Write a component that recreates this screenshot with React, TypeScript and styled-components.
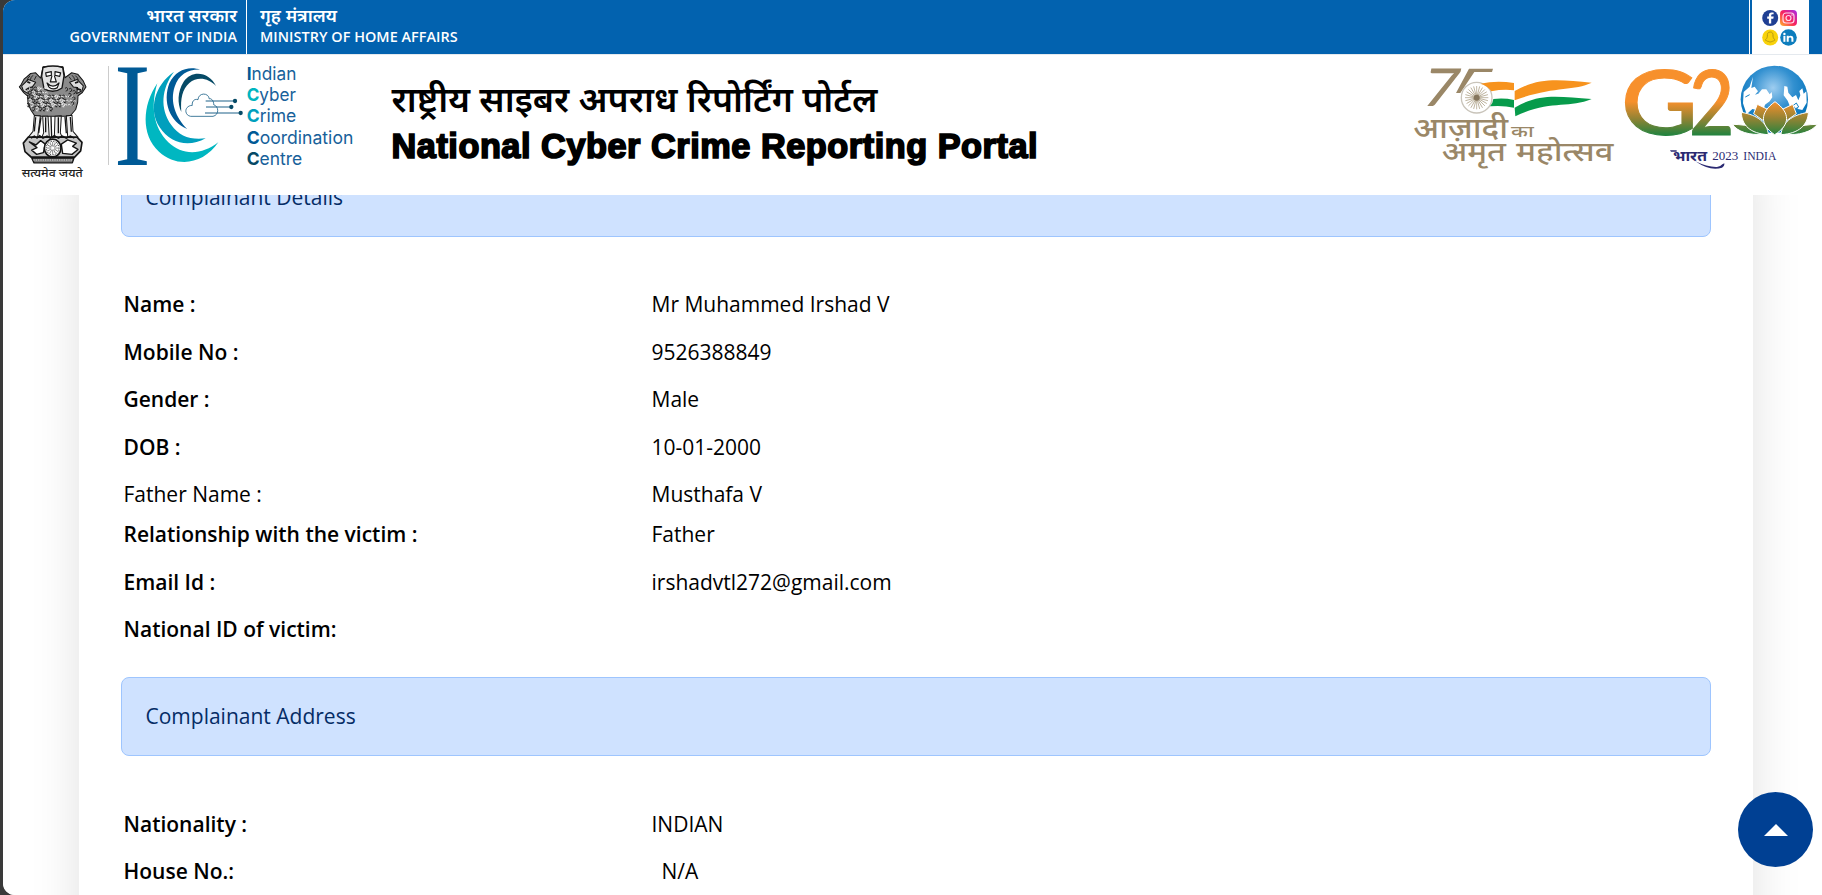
import React from "react";
import styled, { createGlobalStyle } from "styled-components";

const GlobalStyle = createGlobalStyle`
  * { box-sizing: border-box; }
  body {
    margin: 0;
    background: #3a3a3a;
    overflow: hidden;
    color: #000;
    font-family: "Open Sans", "Noto Sans", sans-serif;
  }
  svg { overflow: visible; flex: none; }
`;

const Page = styled.div`
  height: 895px;
  margin-left: 3px;
  background: #fff;
  border-radius: 12px 0 0 12px;
  overflow: hidden;
  display: flex;
  flex-direction: column;
`;

const TopBar = styled.div`
  height: 54px;
  flex: none;
  background: #0262af;
  display: flex;
  color: #fff;
`;

const TopCell = styled.div<{ $align: "left" | "right"; $width: number }>`
  width: ${(p) => p.$width}px;
  padding: 4px ${(p) => (p.$align === "right" ? 9 : 0)}px 0 ${(p) => (p.$align === "left" ? 13 : 0)}px;
  text-align: ${(p) => p.$align};
  border-right: ${(p) => (p.$align === "right" ? "1px solid #fff" : "none")};
  white-space: nowrap;
`;

const HindiSmall = styled.div`
  font-family: "Noto Sans", sans-serif;
  font-size: 18.2px;
  line-height: 22px;
  height: 23px;
  font-weight: 600;
`;

const EnglishSmall = styled.div`
  font-size: 14.4px;
  line-height: 20px;
  font-weight: 600;
  letter-spacing: 0.05px;
`;

const Social = styled.div`
  width: 57px;
  margin: 0 13px 0 auto;
  background: #fff;
  box-shadow: -2px 0 0 #0262af, -3px 0 0 #fff;
  padding: 9px 0 0 10px;
`;

const Header = styled.header`
  height: 141px;
  flex: none;
  border-top: 1px solid #e4e9ee;
  background: #fff;
  display: flex;
  align-items: flex-start;
`;

const EmblemSlot = styled.div`
  width: 106px;
  height: 111px;
  margin-top: 10px;
  padding-left: 12px;
`;

const Separator = styled.div`
  width: 1px;
  height: 99px;
  margin-top: 11px;
  margin-left: -1px;
  background: #ccc;
`;

const Title = styled.div`
  width: 760px;
  margin-left: 22.5px;
  padding-top: 18px;
  white-space: nowrap;
`;

const TitleHindi = styled.div`
  font-family: "Noto Sans", sans-serif;
  font-size: 35.5px;
  line-height: 50px;
  height: 51px;
  font-weight: 600;
`;

const TitleEnglish = styled.div`
  font-family: "Liberation Sans", Arial, sans-serif;
  font-weight: 700;
  font-size: 34.3px;
  line-height: 44px;
  letter-spacing: 0.53px;
  -webkit-text-stroke: 1.7px #000;
`;

const Campaigns = styled.div`
  margin-left: auto;
  display: flex;
  padding-top: 5px;
`;

const Viewport = styled.main`
  flex: 1;
  min-height: 0;
  overflow: hidden;
  background: #fff;
`;

const Card = styled.section`
  width: 1674px;
  height: 900px;
  margin: -37px 0 0 76px;
  padding: 0 42px;
  background: #fff;
  box-shadow: 0 0 46px rgba(0, 0, 0, 0.125);
`;

const SectionTitle = styled.h2`
  height: 79px;
  margin: 0;
  padding: 0 23.5px;
  border: 1px solid #9ec5fe;
  border-radius: 8px;
  background: #cfe2ff;
  color: #052c65;
  font-size: 21px;
  font-weight: 400;
  line-height: 77px;
`;

const Fields = styled.dl`
  margin: 0;
  padding: 52.3px 2.5px 15.7px;
`;

const Field = styled.div<{ $tight?: boolean }>`
  display: grid;
  grid-template-columns: 528px 1fr;
  font-size: 21px;
  line-height: 31.5px;
  height: 31.5px;
  margin-bottom: ${(p) => (p.$tight ? 8.3 : 16)}px;
`;

const Label = styled.dt<{ $plain?: boolean }>`
  font-weight: ${(p) => (p.$plain ? 400 : 600)};
`;

const Value = styled.dd<{ $indent?: boolean }>`
  margin: 0 0 0 ${(p) => (p.$indent ? 10 : 0)}px;
`;

const ScrollTop = styled.button`
  position: fixed;
  left: 1738px;
  top: 792px;
  width: 75px;
  height: 75px;
  border: 0;
  padding: 0;
  border-radius: 50%;
  background: #004093;
  display: flex;
  justify-content: center;
  align-items: center;
`;

const SocialIcons = () => (
  <svg width="36" height="38" viewBox="0 0 36 38">
    <defs>
      <linearGradient id="insta" x1="0" y1="1" x2="1" y2="0">
        <stop offset="0" stopColor="#ffb52e" />
        <stop offset="0.5" stopColor="#f7205f" />
        <stop offset="1" stopColor="#a32cf0" />
      </linearGradient>
    </defs>
    <circle cx="8.2" cy="9" r="8" fill="#1f3f93" />
    <path d="M9.2 14.5V9.7h2.1l.4-2.2H9.2V6.3q0-1 1.2-1h1.2V3.4H9.8Q6.9 3.3 6.9 6v1.5H5.2v2.2h1.7v4.8z" fill="#fff" />
    <rect x="18" y="1" width="17" height="16" rx="4" fill="url(#insta)" />
    <rect x="21" y="4" width="11" height="10" rx="3" fill="none" stroke="#ffd5ea" strokeWidth="1.2" />
    <circle cx="26.5" cy="9" r="2.5" fill="none" stroke="#ffd5ea" strokeWidth="1.2" />
    <circle cx="30" cy="6" r=".7" fill="#fff" />
    <circle cx="8.2" cy="28.5" r="8" fill="#f8d20b" />
    <path d="M8.2 23c-2.5 0-3 1.8-2.8 4.200-.2 2-1.200 3-2.100 3.800 1.500.5 1.700 1.500 2.900 1.300 1.300.9 2.700.9 4 0 1.200.2 1.400-.8 2.900-1.300-.9-.8-1.900-1.800-2.100-3.800C11.200 24.800 10.700 23 8.200 23z" fill="none" stroke="#b79a10" strokeWidth="1" />
    <circle cx="26.5" cy="28.5" r="8.3" fill="#0d7dbd" />
    <g fill="#fff">
      <circle cx="22.4" cy="24.9" r="1.2" />
      <rect x="21.4" y="26.8" width="2" height="6" />
      <path d="M24.7 26.8h2v.8c1-1.5 4.7-1.4 4.7 1.7v3.5h-2v-3.1c0-1.8-2.7-1.7-2.7 0v3.1h-2z" />
    </g>
  </svg>
);

const curls = Array.from({ length: 62 }, (_, i) => {
  const row = Math.floor(i / 11);
  const col = i % 11;
  return { x: 36 + col * 10.5 + (row % 2) * 4.8, y: 64 + row * 11.5, dark: (i * 7) % 3 };
});

const Emblem = () => (
  <svg width="76" height="116" viewBox="0 0 228 348">
    <g transform="scale(1 1.06)">
      <g stroke="#151515" fill="#fff" strokeWidth="3" strokeLinejoin="round">
        <path d="M47 24L35 34 27 40 17 58 13 62 26 78 38 88 39 110 48 128 60 145 165 145 182 126 188 106 189 87 202 78 213 62 204 44 188 26 170 22 150 36 144 5 84 5 77 37 62 22z" fill="#8b8b8b" />
        <path d="M84 7q30-8 59 0l4 24-6 34q-26 18-54 2L80 32z" fill="#e2e2e2" strokeWidth="4" />
        <path d="M92 22l17-3v10l-15 3zM120 19l17 3-3 10-14-3zM111 30l-5 18h18l-6-18M96 51q18 18 36 0l-5 13q-13 8-25-1z" strokeWidth="3.5" />
        <path d="M20 59l20-18 22 8-10 13-14 2 2 17-15-8zM205 59l-19-18-22 8 11 13 13 2-3 17 16-8z" fill="#ddd" />
        <path d="M37 48l9 3M190 48l-10 3M32 70l12-4M184 66l14 5" strokeWidth="5" />
        <path d="M58 143l-4 45-14 16q12 9 28 0l8-60zM83 145l3 47-7 16h24l-4-63zM120 145l-2 61h24l-6-14 3-48zM154 144l4 58q16 10 31 2l-15-16-3-46z" fill="#eee" />
        <path d="M62 148l-4 40M78 148l-7 44M92 148v42M108 146l2 60M130 148v45M150 147l4 46M166 147l3 42" fill="none" strokeWidth="4" />
        <path d="M40 204h146l15 15-4 24-18 18H49l-19-16-5-24z" fill="#c5c5c5" strokeWidth="5" />
        <path d="M43 218l20 8 14-12 14 10-6 24-20 5-15-12 16-7zM139 224l19-12 26 9-11 9 16 9-18 14-28-3z" strokeWidth="4" />
        <circle cx="113" cy="235" r="25" strokeWidth="5" />
        <circle cx="113" cy="235" r="19" strokeDasharray="2 3" />
        <path d="M50 263h127l-5 14H57z" fill="#777" strokeWidth="4" />
        <path d="M55 269h116" stroke="#ddd" strokeDasharray="4 3" />
      </g>
      {Array.from({ length: 12 }, (_, i) => (
        <path key={i} d="M113 218v12" stroke="#555" strokeWidth="2" transform={`rotate(${i * 30} 113 235)`} />
      ))}
      <g fill="none" strokeWidth="2.4">
        {curls.map((c, i) =>
          (c.y < 82 && c.x > 76 && c.x < 148) || (c.y > 115 && (c.x < 48 || c.x > 172)) || c.x > 186 ? null : (
            <path key={i} d={`M${c.x} ${c.y}q6-5 8 1t-6 7M${c.x + 1} ${c.y + 5}l4 5`} stroke={c.dark ? "#111" : "#eee"} />
          ),
        )}
        {curls.map((c, i) =>
          (c.y < 82 && c.x > 70) || c.y > 115 || c.x > 150 ? null : (
            <path key={i} d={`M${c.x + 28} ${c.y + 4}q4-6 8 0`} stroke="#fff" />
          ),
        )}
        <path d="M150 66q6-5 8 1t-6 7M162 68q6-5 8 1t-6 7M173 74q6-5 8 1t-6 7M160 82q6-5 8 1t-6 7M172 92q6-5 8 1t-6 7M168 106q6-5 8 1t-6 7" stroke="#111" />
        <path d="M45 31q-8 6-9 13M54 29q-7 6-8 13M64 31l-6 11M181 30q8 6 9 13M171 29q7 6 8 13M162 33l7 9" stroke="#111" />
        <path d="M48 207l10-6 8 6 8-7 10 7 12-6 10 6 12-7 12 7 12-6 12 6 12-6 12 6" stroke="#111" strokeWidth="4" />
      </g>
    </g>
    <text x="20" y="337" fontFamily="Noto Sans, sans-serif" fontWeight="500" fontSize="35" fill="#222" textLength="183" lengthAdjust="spacingAndGlyphs">सत्यमेव जयते</text>
  </svg>
);

const icccWords: [string, string, number, string][] = [
  ["I", "ndian", 149, "#005a96"],
  ["C", "yber", 148, "#00b5c0"],
  ["C", "rime", 149, "#009fbd"],
  ["C", "oordination", 320, "#005a96"],
  ["C", "entre", 167, "#064a66"],
];

const IcccLogo = () => (
  <svg width="260" height="120" viewBox="0 0 780 360">
    <text x="15" y="329" fontFamily="Liberation Serif, serif" fontSize="448" fill="#005a96" textLength="110" lengthAdjust="spacingAndGlyphs">I</text>
    <path d="M145 85C100 150 95 240 150 290C205 340 283 328 328 262C280 300 220 303 178 262C132 217 125 150 145 85Z" fill="#00b7c1" />
    <path d="M195 50C135 92 118 165 152 217C185 267 240 278 290 250C245 256 210 243 187 210C152 160 157 102 195 50Z" fill="#009fbd" />
    <path d="M275 44C240 32 200 43 181 85C160 140 182 202 235 222C200 188 182 140 197 95C210 57 240 42 275 44Z" fill="#005a96" />
    <path d="M321 93C302 52 250 42 224 80C205 110 205 145 217 171C214 130 220 103 241 84C266 63 299 70 321 93Z" fill="#064a66" />
    <g fill="none" stroke="#1e6389" strokeWidth="2.5">
      <path d="M245 184H312C331 180 330 154 314 149C315 137 305 128 301 132C299 112 268 112 267 134C254 130 248 142 250 151C225 152 225 181 245 184Z" />
      <path d="M290 138H374M291 156H364M288 174H392" strokeWidth="3.5" />
    </g>
    <g fill="#064a66">
      <circle cx="378" cy="138" r="6.5" />
      <circle cx="367" cy="156" r="6.5" />
      <circle cx="395" cy="174" r="6.5" />
    </g>
    {icccWords.map(([initial, rest, width, color], i) => (
      <text key={rest} x="413" y={75 + i * 63.5} fontFamily="Inter, sans-serif" fontSize="54" fill="#17619a" textLength={width} lengthAdjust="spacingAndGlyphs">
        <tspan fill={color} fontWeight="700">{initial}</tspan>
        {rest}
      </text>
    ))}
  </svg>
);

const AmritLogo = () => (
  <svg width="205" height="115" viewBox="0 0 615 345">
    <g fill="#9a8767">
      <text transform="translate(31 138) skewX(-12)" x="0" y="0" fontFamily="Lato, sans-serif" fontWeight="500" fontSize="157" textLength="106" lengthAdjust="spacingAndGlyphs">7</text>
      <path d="M177 26H249L246 36H193L151 99H138Z" />
    </g>
    <circle cx="200" cy="113" r="46" fill="#fff" stroke="#c9c4ba" strokeWidth="4" />
    {Array.from({ length: 24 }, (_, i) => (
      <path key={i} d="M200 78V108" stroke="#a49679" strokeWidth="2" transform={`rotate(${i * 15} 200 113)`} />
    ))}
    <circle cx="200" cy="113" r="9" fill="#85765d" />
    <path d="M211 71Q260 60 312 69V91Q280 87 244 94Q234 78 211 71ZM314 93C390 50 450 60 545 68C490 94 425 78 314 121Z" fill="#f7931e" />
    <path d="M250 117Q282 113 312 120V143Q280 136 240 139Q248 132 250 117ZM314 143C395 95 455 113 545 117C475 146 420 119 316 169Z" fill="#079b4b" />
    <g fill="#9a8767" fontFamily="Noto Sans, sans-serif" fontWeight="500">
      <text x="10" y="233" fontSize="84" textLength="284" lengthAdjust="spacingAndGlyphs">आज़ादी</text>
      <text x="303" y="231" fontSize="50" textLength="68" lengthAdjust="spacingAndGlyphs">का</text>
      <text x="95" y="302" fontSize="80" textLength="193" lengthAdjust="spacingAndGlyphs">अमृत</text>
      <text x="318" y="302" fontSize="80" textLength="292" lengthAdjust="spacingAndGlyphs">महोत्सव</text>
    </g>
  </svg>
);

const G20Logo = () => (
  <svg width="207" height="115" viewBox="0 0 621 345">
    <defs>
      <linearGradient id="tricolor" gradientUnits="userSpaceOnUse" x1="0" y1="125" x2="0" y2="225">
        <stop offset="0" stopColor="#f7902c" />
        <stop offset="0.5" stopColor="#948333" />
        <stop offset="1" stopColor="#23833f" />
      </linearGradient>
      <radialGradient id="globe" cx="0.48" cy="0.33" r="0.62">
        <stop offset="0" stopColor="#9ecdf0" />
        <stop offset="0.5" stopColor="#3290d0" />
        <stop offset="1" stopColor="#0071b9" />
      </radialGradient>
    </defs>
    <g fill="url(#tricolor)" stroke="url(#tricolor)" strokeWidth="3" fontFamily="Lato, sans-serif" fontWeight="500">
      <text x="17" y="225" fontSize="274" textLength="232" lengthAdjust="spacingAndGlyphs">G</text>
      <text x="222" y="225" fontSize="272" textLength="136" lengthAdjust="spacingAndGlyphs">2</text>
    </g>
    <circle cx="478" cy="118" r="101" fill="url(#globe)" />
    <path d="M386 96L404 80 414 50 409 84 419 80 429 94 420 104 430 101 441 88 454 88 464 103 470 96 472 112 464 124 450 134 444 154 412 147 395 163 384 130ZM506 106L508 78 517 80 520 98 532 112 543 105 550 121 556 106 553 93 562 85 566 101 574 94 575 128 562 150 549 147 539 134 526 142 518 122Z" fill="#fff" />
    <path d="M534 137l10-8 7 12-9 5zM391 111l13-7" stroke="#1280c3" strokeWidth="3" fill="#fff" />
    <g fill="url(#tricolor)" stroke="#fff" strokeWidth="3">
      <path d="M353 193C365 214 405 228 448 222C435 206 406 194 353 193ZM607 193C591 215 551 228 508 222C523 206 552 194 607 193Z" />
      <path d="M427 133L460 149 445 182 416 161ZM533 133L500 149 515 182 544 161Z" />
      <path d="M379 157C380 195 405 221 460 224C457 188 428 165 379 157ZM580 157C579 195 551 221 498 224C501 188 529 165 580 157Z" />
      <path d="M480 125C434 158 434 194 479 224C527 194 526 158 480 125Z" />
    </g>
    <g fill="#2b2a72">
      <text x="174" y="303" fontFamily="Noto Sans, sans-serif" fontWeight="700" fontSize="44" textLength="102" lengthAdjust="spacingAndGlyphs">भारत</text>
      <text x="292" y="301" fontFamily="Liberation Serif, serif" fontSize="35" textLength="78" lengthAdjust="spacingAndGlyphs">2023</text>
      <text x="385" y="299" fontFamily="Liberation Serif, serif" fontSize="36" textLength="99" lengthAdjust="spacingAndGlyphs">INDIA</text>
      <path d="M165 271h20v4h-17zM241 304Q286 335 321 323Q329 319 328 310L322 313Q317 320 306 321Q278 322 241 304Z" />
    </g>
  </svg>
);

interface Row {
  label: string;
  value: string;
  plain?: boolean;
  indent?: boolean;
}

const details: Row[] = [
  { label: "Name :", value: "Mr Muhammed Irshad V" },
  { label: "Mobile No :", value: "9526388849" },
  { label: "Gender :", value: "Male" },
  { label: "DOB :", value: "10-01-2000" },
  { label: "Father Name :", value: "Musthafa V", plain: true },
  { label: "Relationship with the victim :", value: "Father" },
  { label: "Email Id :", value: "irshadvtl272@gmail.com" },
  { label: "National ID of victim:", value: "" },
];

const address: Row[] = [
  { label: "Nationality :", value: "INDIAN" },
  { label: "House No.:", value: "N/A", indent: true },
];

const FieldList = ({ rows }: { rows: Row[] }) => (
  <Fields>
    {rows.map((r) => (
      <Field key={r.label} $tight={r.plain}>
        <Label $plain={r.plain}>{r.label}</Label>
        <Value $indent={r.indent}>{r.value}</Value>
      </Field>
    ))}
  </Fields>
);

export default function App() {
  return (
    <>
      <GlobalStyle />
      <Page>
        <TopBar>
          <TopCell $align="right" $width={244}>
            <HindiSmall>भारत सरकार</HindiSmall>
            <EnglishSmall>GOVERNMENT OF INDIA</EnglishSmall>
          </TopCell>
          <TopCell $align="left" $width={260}>
            <HindiSmall>गृह मंत्रालय</HindiSmall>
            <EnglishSmall>MINISTRY OF HOME AFFAIRS</EnglishSmall>
          </TopCell>
          <Social>
            <SocialIcons />
          </Social>
        </TopBar>
        <Header>
          <EmblemSlot>
            <Emblem />
          </EmblemSlot>
          <Separator />
          <IcccLogo />
          <Title>
            <TitleHindi>राष्ट्रीय साइबर अपराध रिपोर्टिंग पोर्टल</TitleHindi>
            <TitleEnglish>National Cyber Crime Reporting Portal</TitleEnglish>
          </Title>
          <Campaigns>
            <AmritLogo />
            <G20Logo />
          </Campaigns>
        </Header>
        <Viewport>
          <Card>
            <SectionTitle>Complainant Details</SectionTitle>
            <FieldList rows={details} />
            <SectionTitle>Complainant Address</SectionTitle>
            <FieldList rows={address} />
          </Card>
        </Viewport>
      </Page>
      <ScrollTop aria-label="Back to top">
        <svg width="24" height="12" viewBox="0 0 24 12">
          <path d="M0 12L12 0 24 12Z" fill="#fff" />
        </svg>
      </ScrollTop>
    </>
  );
}
